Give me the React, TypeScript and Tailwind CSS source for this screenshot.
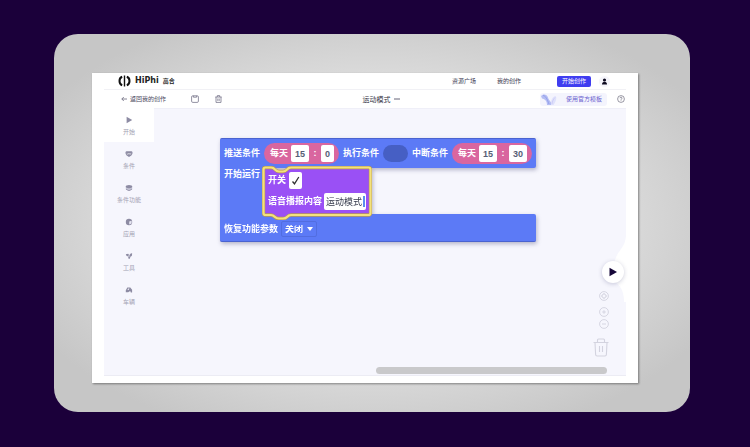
import React from "react";

const ink = "#8d8ba3";

function PlayGlyph() {
  return (
    <svg className="h-2 w-2" viewBox="0 0 8 8" fill={ink}>
      <path d="M1.600.8v6.400L7.200 4z" />
    </svg>
  );
}

function ConditionGlyph() {
  return (
    <svg className="h-2 w-2" viewBox="0 0 8 8">
      <path d="M.6 2.200Q.6 1.200 1.600 1.200h4.800q1 0 1 1v1.600Q7 5.800 4 7 1 5.800.6 3.800z" fill={ink} />
      <path d="M1.800 3.400l1 .9 1.200-.9 1 .9 1.200-.9" stroke="#fff" strokeWidth=".7" fill="none" />
    </svg>
  );
}

function LayersGlyph() {
  return (
    <svg className="h-2 w-2" viewBox="0 0 8 8">
      <path d="M.8 3.200v2.200L4 7l3.200-1.600V3.200z" fill="#c4c3d4" />
      <ellipse cx="4" cy="2.600" rx="3.300" ry="1.700" fill={ink} />
      <path d="M1 5.200L4 6.700l3-1.500" stroke={ink} strokeWidth=".7" fill="none" />
    </svg>
  );
}

function AppGlyph() {
  return (
    <svg className="h-2 w-2" viewBox="0 0 8 8">
      <circle cx="4" cy="4" r="3.200" fill={ink} />
      <path d="M4.200 3.600l2.400-.8v2.600L4.200 6.600z" fill="#e6e6f2" />
    </svg>
  );
}

function ToolGlyph() {
  return (
    <svg className="h-2 w-2" viewBox="0 0 8 8">
      <path d="M.8 2.200l2.400-.4 1 1.400L6 1.200l1.200.3-.4 2.400-1.200.5-1 2.600-1.500-.8.4-1.600L1.600 4z" fill={ink} />
      <circle cx="4" cy="3.900" r=".7" fill="#f5f5fd" />
    </svg>
  );
}

function CarGlyph() {
  return (
    <svg className="h-2 w-2" viewBox="0 0 8 8">
      <path d="M.8 6.200V4.200l1.500-2.600 3-.2 1.800 2.400v2.600H5.800L5.200 5 3.200 6.200z" fill={ink} />
      <path d="M2.400 3.800l1-1.200h1L3.600 4z" fill="#f5f5fd" />
    </svg>
  );
}

const categories = [
  { label: "开始", Glyph: PlayGlyph },
  { label: "条件", Glyph: ConditionGlyph },
  { label: "条件功能", Glyph: LayersGlyph },
  { label: "应用", Glyph: AppGlyph },
  { label: "工具", Glyph: ToolGlyph },
  { label: "车辆", Glyph: CarGlyph },
];

function Header() {
  return (
    <header className="flex h-[17px] items-center border-b border-[#f1f1f5] pl-3.5 pr-4">
      <div className="flex items-center gap-1">
        <svg className="h-3 w-[13px]" viewBox="0 0 13 12" fill="none" stroke="#111">
          <path d="M4.200 1.800C.6 3 .6 9 4.200 10.200" strokeWidth="2" />
          <path d="M8.800 1.800c3.600 1.200 3.600 7.200 0 8.400" strokeWidth="2" />
          <path d="M6.500.5v11" strokeWidth="1.400" />
        </svg>
        <span className="flex items-center gap-1 leading-none text-[#222]">
          <span className="font-['DejaVu_Sans',sans-serif] text-[8px] font-bold">HiPhi</span>
          <span className="text-[6px] font-bold">高合</span>
        </span>
      </div>
      <nav className="ml-auto flex gap-[21px] text-[6px] leading-none text-[#3c3a52]">
        <a href="#square">资源广场</a>
        <a href="#mine">我的创作</a>
      </nav>
      <button className="ml-9 h-[11px] w-[34px] rounded-[2px] bg-[#3f3df0] text-[6px] leading-none text-white">
        开始创作
      </button>
      <button aria-label="账户" className="ml-2 flex h-[11px] w-[11px] items-center justify-center rounded-full bg-[#f5f5fb]">
        <svg className="h-[7px] w-[7px]" viewBox="0 0 7 7" fill="#0d0a20">
          <circle cx="3.500" cy="2" r="1.600" />
          <path d="M1 6.600c0-2 1-2.800 2.500-2.800S6 4.600 6 6.600z" />
        </svg>
      </button>
    </header>
  );
}

function Toolbar() {
  return (
    <div className="flex h-[18px] items-center justify-between pl-[17px] pr-px text-[#4a485e]">
      <div className="flex items-center">
        <a href="#back" className="flex items-center gap-[3px] text-[6px] leading-none">
          <svg className="h-1.5 w-1.5" viewBox="0 0 6 6" fill="none" stroke="#6a687c" strokeWidth=".8">
            <path d="M6 3H.8M2.800 1L.8 3l2 2" />
          </svg>
          返回我的创作
        </a>
        <button aria-label="保存" className="ml-[25px]">
          <svg className="h-2 w-2" viewBox="0 0 8 8" fill="none" stroke="#77758a" strokeWidth=".8">
            <rect x=".6" y=".8" width="6.800" height="6.600" rx="1.200" />
            <path d="M2.400.8v1.400h3.200V.8" />
          </svg>
        </button>
        <button aria-label="删除" className="ml-4">
          <svg className="h-2 w-[7px]" viewBox="0 0 7 8" fill="none" stroke="#77758a" strokeWidth=".8">
            <path d="M.3 2h6.400M2.300 2V.6h2.400V2M1 2v5.400h5V2M2.800 3.500v2.400M4.200 3.500v2.400" />
          </svg>
        </button>
      </div>
      <div className="flex items-center gap-[3px] text-[7px] leading-none text-[#33313f]">
        运动模式
        <svg className="h-1.5 w-1.5" viewBox="0 0 6 6" fill="none" stroke="#55536a" strokeWidth=".9">
          <path d="M0 3h6" />
        </svg>
      </div>
      <div className="flex items-center gap-2.5">
        <button className="flex h-[13px] w-[67px] items-center gap-2 rounded-[3px] bg-[#f4f4fd] text-[6px] leading-none text-[#6b62cf]">
          <svg className="h-[13px] w-[18px] shrink-0" viewBox="0 0 18 13">
            <path d="M1 3c2-2.500 6-2 7 1.500S11 8 12 12H7C7 8 5 6 2 5.500z" fill="#b4bdf3" />
            <path d="M3 2.500C6 3 7 6 9 11" stroke="#8f9bea" strokeWidth=".9" fill="none" />
            <path d="M11 12c-.5-4 1-8 4.500-9 2 2-.5 7-2 9z" fill="#dfe1fb" />
            <path d="M12 11c.3-3 1.500-5 3-6.500" stroke="#c6c4f5" strokeWidth=".7" fill="none" />
          </svg>
          <span className="whitespace-nowrap">使用官方模板</span>
        </button>
        <button aria-label="帮助">
          <svg className="h-2 w-2" viewBox="0 0 8 8" fill="none" stroke="#6d6b7c" strokeWidth=".7">
            <circle cx="4" cy="4" r="3.400" />
            <path d="M3 3.200c0-1.400 2-1.300 2 0 0 .8-1 .8-1 1.600M4 5.400v.6" />
          </svg>
        </button>
      </div>
    </div>
  );
}

function Sidebar() {
  return (
    <nav className="w-[50px] shrink-0">
      {categories.map(({ label, Glyph }, i) => (
        <button
          key={label}
          className={
            "flex h-[34px] w-full flex-col items-center gap-[5px] pt-2 text-[6px] leading-none text-[#a3a2b3] " +
            (i === 0 ? "bg-white" : "")
          }
        >
          <Glyph />
          {label}
        </button>
      ))}
    </nav>
  );
}

function TimePill({ hour, minute, wide, name }: { hour: string; minute: string; wide?: boolean; name: string }) {
  const field = "h-[17px] rounded-[2px] bg-white p-0 text-center font-bold text-[#575e75] outline-none";
  return (
    <span className="flex h-[21px] items-center rounded-full bg-[#d9669f] pl-1.5 pr-[5px]">
      <span className="mr-[3px]">每天</span>
      <input aria-label={name + "小时"} defaultValue={hour} className={field + " w-[18px]"} />
      <span className="w-3 text-center">:</span>
      <input aria-label={name + "分钟"} defaultValue={minute} className={field + (wide ? " w-[18px]" : " w-[13px]")} />
    </span>
  );
}

const actionOutline =
  "M3.500 1.500H9c2 0 3 .8 4 2s2 2 4 2h4c2 0 3-.8 4-2s2-2 4-2h77.500q2 0 2 2V47q0 2-2 2H29c-2 0-3 .8-4 2s-2 1.500-4 1.500h-4c-2 0-3-.5-4-1.500s-2-2-4-2H3.500q-2 0-2-2V3.500q0-2 2-2z";

function ActionBlock() {
  return (
    <div className="absolute left-[42px] top-[-2px] h-[54px] w-[110px]">
      <svg className="absolute inset-0 h-full w-full" viewBox="0 0 110 54">
        <path d={actionOutline} fill="#9a50f5" stroke="#b89a50" strokeWidth="3.400" />
        <path d={actionOutline} fill="none" stroke="#f3e27c" strokeWidth="2.200" />
      </svg>
      <div className="relative flex flex-col gap-1 pl-1.5 pt-1.5">
        <label className="flex items-center gap-[3px]">
          开关
          <span className="relative h-[17px] w-[13px]">
            <input type="checkbox" defaultChecked className="block h-[17px] w-[13px] appearance-none rounded-[2px] bg-white" />
            <svg className="pointer-events-none absolute inset-0 h-full w-full" viewBox="0 0 13 17" fill="none" stroke="#333" strokeWidth="1.300">
              <path d="M3.500 9.500l2 2.300L9.800 5" />
            </svg>
          </span>
        </label>
        <label className="flex items-center gap-0.5">
          语音播报内容
          <span className="flex h-[17px] w-[42px] items-center rounded-[2px] bg-white pl-0.5">
            <input defaultValue="运动模式" className="w-[37px] bg-transparent p-0 font-normal text-[#33384a] outline-none" />
            <span className="h-[11px] w-0.5 shrink-0 bg-[#5b8def]" />
          </span>
        </label>
      </div>
    </div>
  );
}

function Program() {
  return (
    <div className="absolute left-[66px] top-[29px] w-[316px] whitespace-nowrap text-[9px] font-bold leading-none text-white drop-shadow-[1px_2px_2px_rgba(60,60,110,0.35)]">
      <div className="flex h-[30px] items-center gap-1 rounded-t-[2px] rounded-br-[2px] border-t border-[#4a63d0] bg-[#5c7af6] px-1">
        <span>推送条件</span>
        <TimePill name="推送" hour="15" minute="0" />
        <span>执行条件</span>
        <span className="h-[17px] w-[25px] rounded-full bg-[#465fc4]" />
        <span>中断条件</span>
        <TimePill name="中断" hour="15" minute="30" wide />
      </div>
      <div className="relative h-[46px]">
        <div className="h-full w-[44px] bg-[#5c7af6] pl-1 pt-0.5">开始运行</div>
        <ActionBlock />
      </div>
      <div className="flex h-7 items-center gap-[3px] rounded-b-[2px] rounded-tr-[2px] border-b border-[#4a63d0] bg-[#5c7af6] pl-1 pt-[3px]">
        <label htmlFor="restore">恢复功能参数</label>
        <span className="relative">
          <select
            id="restore"
            className="block h-4 w-9 appearance-none rounded-[2px] border border-[#526de0] bg-[#5c7af6] p-0 pl-[3px] font-bold text-white outline-none"
          >
            <option>关闭</option>
          </select>
          <svg className="pointer-events-none absolute right-1 top-1.5 h-1 w-1.5" viewBox="0 0 6 4" fill="#fff">
            <path d="M0 0h6L3 4z" />
          </svg>
        </span>
      </div>
    </div>
  );
}

function CanvasControls() {
  return (
    <>
      <svg className="absolute right-0 top-[127px] h-[68px] w-4" viewBox="0 0 16 68" fill="#fff">
        <path d="M16 0C15 12 8 14 5 24L2 34l3 12c6 4 9 10 9 20h2z" />
      </svg>
      <button
        aria-label="运行"
        className="absolute right-0.5 top-[152px] flex h-[22px] w-[22px] items-center justify-center rounded-full bg-white shadow-[0_1px_4px_rgba(60,60,110,0.25)]"
      >
        <svg className="h-2.5 w-2.5" viewBox="0 0 10 10" fill="#150638">
          <path d="M1.500.8v8.400L9 5z" />
        </svg>
      </button>
      <div className="absolute bottom-[18px] right-[17px] flex flex-col items-end text-[#d3d3df]">
        <button aria-label="居中" className="mb-1.5">
          <svg className="h-2.5 w-2.5" viewBox="0 0 10 10" fill="none" stroke="currentColor" strokeWidth=".9">
            <circle cx="5" cy="5" r="4.400" />
            <circle cx="5" cy="5" r="2" />
            <path d="M5 2v1M5 7v1M2 5h1M7 5h1" />
          </svg>
        </button>
        <button aria-label="放大" className="mb-0.5">
          <svg className="h-2.5 w-2.5" viewBox="0 0 10 10" fill="none" stroke="currentColor" strokeWidth=".9">
            <circle cx="5" cy="5" r="4.400" />
            <path d="M3.200 5h3.600M5 3.200v3.600" />
          </svg>
        </button>
        <button aria-label="缩小" className="mb-[9px]">
          <svg className="h-2.5 w-2.5" viewBox="0 0 10 10" fill="none" stroke="currentColor" strokeWidth=".9">
            <circle cx="5" cy="5" r="4.400" />
            <path d="M3 5h4" />
          </svg>
        </button>
        <button aria-label="回收站">
          <svg className="h-[19px] w-4" viewBox="0 0 16 19" fill="none" stroke="currentColor" strokeWidth="1.100">
            <path d="M.5 4.500h15M4.500 4.500V2q0-1 1-1h5q1 0 1 1v2.500M2 4.500l.6 12q.1 1.500 1.500 1.500h7.800q1.400 0 1.500-1.500l.6-12M6.500 8v6M9.500 8v6" />
          </svg>
        </button>
      </div>
      <div className="absolute bottom-px right-[19px] h-[7px] w-[231px] rounded-full bg-[#c9c9cb]" />
    </>
  );
}

export default function App() {
  return (
    <div className="flex min-h-screen flex-col bg-[#1b003a] pb-[35px] pl-[54px] pr-[60px] pt-[34px] font-['Liberation_Sans','Noto_Sans_CJK_SC',sans-serif]">
      <main className="flex flex-1 flex-col rounded-3xl bg-[radial-gradient(ellipse_at_center,#ececec_0%,#dedede_50%,#c6c6c6_85%)] pb-[29px] pl-[38px] pr-[52px] pt-[39px]">
        <div className="flex flex-1 flex-col bg-white px-3 pb-[7px] shadow-[1px_1px_2px_rgba(0,0,0,0.4)]">
          <Header />
          <Toolbar />
          <div className="flex min-h-[267px] flex-1 border-b border-[#ececf4] bg-[#f6f6fd]">
            <Sidebar />
            <section className="relative flex-1 border-t border-[#efeff8]">
              <Program />
              <CanvasControls />
            </section>
          </div>
        </div>
      </main>
    </div>
  );
}
